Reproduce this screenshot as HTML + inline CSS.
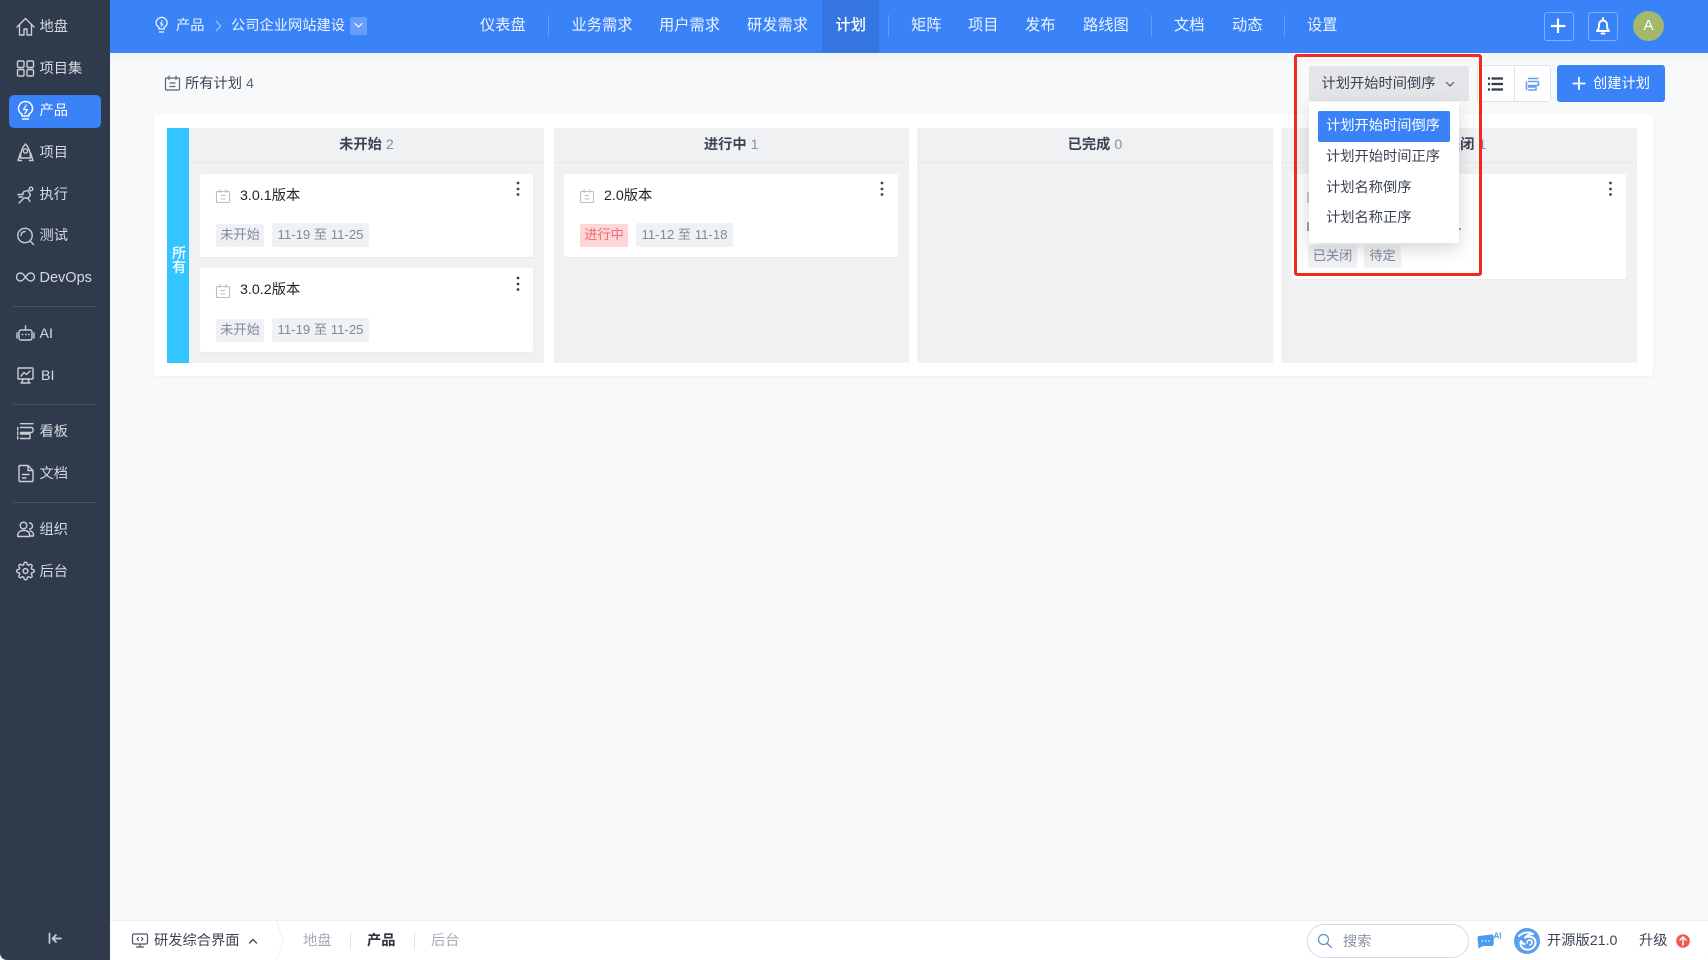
<!DOCTYPE html>
<html lang="zh">
<head>
<meta charset="utf-8">
<title>计划</title>
<style>
html,body{margin:0;padding:0;width:1708px;height:960px;overflow:hidden;background:#fff}
body{font-family:"Liberation Sans","Noto Sans CJK SC",sans-serif;font-size:14.25px;color:#3c4353}
#p{position:absolute;left:0;top:0;width:1708px;height:960px;background:#f8f9fb;overflow:hidden;border-radius:0 0 7px 7px;filter:blur(.3px)}
.b{position:absolute}
.t{position:absolute;white-space:nowrap;line-height:20px;height:20px}
.s{color:#d6dade}
.n{color:#eef4ff;font-size:15.25px}
.sep{position:absolute;width:1px;background:rgba(255,255,255,.22);top:15px;height:22px}
.d{position:absolute;left:13px;width:84px;height:1px;background:#465163}
.col{position:absolute;top:128px;height:235px;background:#f0f1f3}
.ch{position:absolute;left:0;right:0;top:0;height:34px;border-bottom:1px solid #e6e8eb;text-align:center;line-height:35px;font-weight:700;color:#3c4353;font-size:14.25px}
.ch span{font-weight:400;color:#8591a3;margin-left:0}
.card{position:absolute;background:#fff;border-radius:2px;box-shadow:0 1px 1px rgba(0,0,0,.03)}
.tag{position:absolute;height:23px;line-height:22px;font-size:13.2px;text-align:center;border-radius:2px;background:#eff1f4;color:#7f8a9a;white-space:nowrap}
.ti{color:#20242c;font-size:14.25px}
.mi{position:absolute;left:1326px;white-space:nowrap;line-height:20px;color:#3c4353;font-size:14.25px}
</style>
</head>
<body>
<div id="p">
  <!-- sidebar -->
  <div class="b" style="left:0;top:0;width:110px;height:960px;background:#2f3b4d"></div>
  <div class="b" style="left:9px;top:95px;width:92px;height:33px;background:#3a82f8;border-radius:5px"></div>
  <div class="t s" style="left:39.5px;top:17px">地盘</div>
  <div class="t s" style="left:39.5px;top:59px">项目集</div>
  <div class="t" style="left:39.5px;top:101px;color:#fff">产品</div>
  <div class="t s" style="left:39.5px;top:143px">项目</div>
  <div class="t s" style="left:39.5px;top:185px">执行</div>
  <div class="t s" style="left:39.5px;top:226px">测试</div>
  <div class="t s" style="left:39.5px;top:268px;font-size:14.5px">DevOps</div>
  <div class="d" style="top:306px"></div>
  <div class="t s" style="left:39.5px;top:324px">AI</div>
  <div class="t s" style="left:41px;top:366px">BI</div>
  <div class="d" style="top:404px"></div>
  <div class="t s" style="left:39.5px;top:422px">看板</div>
  <div class="t s" style="left:39.5px;top:464px">文档</div>
  <div class="d" style="top:502px"></div>
  <div class="t s" style="left:39.5px;top:520px">组织</div>
  <div class="t s" style="left:39.5px;top:562px">后台</div>

  <!-- header -->
  <div class="b" style="left:110px;top:0;width:1598px;height:53px;background:#3a82f8"></div>
  <div class="b" style="left:110px;top:53px;width:1598px;height:12px;background:linear-gradient(#f2f4f6,#f8f9fb)"></div>
  <div class="t" style="left:176px;top:15.5px;color:#eef4ff">产品</div>
  <div class="t" style="left:231px;top:15.5px;color:#eef4ff">公司企业网站建设</div>
  <div class="b" style="left:350px;top:17px;width:17px;height:18px;border-radius:2px;background:rgba(255,255,255,.22)"></div>
  <div class="b" style="left:822px;top:0;width:57px;height:53px;background:#3576e0"></div>
  <div class="t n" style="left:480px;top:15.5px">仪表盘</div>
  <div class="sep" style="left:548px"></div>
  <div class="t n" style="left:571.5px;top:15.5px">业务需求</div>
  <div class="t n" style="left:659px;top:15.5px">用户需求</div>
  <div class="t n" style="left:747px;top:15.5px">研发需求</div>
  <div class="t n" style="left:835.5px;top:15.5px;color:#fff;font-weight:500">计划</div>
  <div class="sep" style="left:888px"></div>
  <div class="t n" style="left:911px;top:15.5px">矩阵</div>
  <div class="t n" style="left:968px;top:15.5px">项目</div>
  <div class="t n" style="left:1025px;top:15.5px">发布</div>
  <div class="t n" style="left:1083px;top:15.5px">路线图</div>
  <div class="sep" style="left:1151px"></div>
  <div class="t n" style="left:1174px;top:15.5px">文档</div>
  <div class="t n" style="left:1232px;top:15.5px">动态</div>
  <div class="sep" style="left:1284px"></div>
  <div class="t n" style="left:1307px;top:15.5px">设置</div>
  <div class="b" style="left:1544px;top:12px;width:28px;height:27px;border:1px solid rgba(255,255,255,.35);border-radius:3px"></div>
  <div class="b" style="left:1588px;top:12px;width:28px;height:27px;border:1px solid rgba(255,255,255,.35);border-radius:3px"></div>
  <div class="b" style="left:1633px;top:11px;width:31px;height:30px;border-radius:50%;background:#a3b86c;color:#fff;text-align:center;line-height:30px;font-size:15px">A</div>

  <!-- toolbar -->
  <div class="t" style="left:185px;top:74px;color:#3c4353;font-size:14.25px">所有计划 <span style="color:#5c6778">4</span></div>
  <div class="b" style="left:1477px;top:65px;width:72px;height:35px;background:#fff;border:1px solid #dfe2e8;border-radius:3px"></div>
  <div class="b" style="left:1514px;top:66px;width:1px;height:35px;background:#dfe2e8"></div>
  <div class="b" style="left:1557px;top:65px;width:108px;height:37px;background:#3a82f8;border-radius:3px"></div>
  <div class="t" style="left:1593px;top:74px;color:#fff">创建计划</div>

  <!-- board -->
  <div class="b" style="left:154px;top:114px;width:1499px;height:262px;background:#fff;border-radius:3px;box-shadow:0 1px 3px rgba(0,0,0,.05)"></div>
  <div class="b" style="left:167px;top:128px;width:22px;height:235px;background:#33c5ff"></div>
  <div class="b" style="left:172px;top:248px;width:15px;color:#fff;font-size:14.25px;line-height:13.5px;font-weight:500">所有</div>

  <div class="col" style="left:189px;width:355px">
    <div class="ch">未开始 <span>2</span></div>
  </div>
  <div class="col" style="left:553.5px;width:355.5px">
    <div class="ch">进行中 <span>1</span></div>
  </div>
  <div class="col" style="left:917px;width:356px">
    <div class="ch">已完成 <span>0</span></div>
  </div>
  <div class="col" style="left:1281px;width:356px">
    <div class="ch">已关闭 <span>1</span></div>
  </div>

  <div class="card" style="left:200px;top:174px;width:333px;height:83px"></div>
  <div class="t ti" style="left:240px;top:186px">3.0.1版本</div>
  <div class="tag" style="left:216px;top:224px;width:48px">未开始</div>
  <div class="tag" style="left:272px;top:223px;width:97px;height:24px;line-height:23.5px">11-19 至 11-25</div>

  <div class="card" style="left:200px;top:268px;width:333px;height:84px"></div>
  <div class="t ti" style="left:240px;top:280px">3.0.2版本</div>
  <div class="tag" style="left:216px;top:319px;width:48px">未开始</div>
  <div class="tag" style="left:272px;top:318px;width:97px;height:24px;line-height:23px">11-19 至 11-25</div>

  <div class="card" style="left:564px;top:174px;width:334px;height:83px"></div>
  <div class="t ti" style="left:604px;top:186px">2.0版本</div>
  <div class="tag" style="left:580px;top:224px;width:48px;background:#ffd6d8;color:#ee6b6f">进行中</div>
  <div class="tag" style="left:636px;top:223px;width:97px;height:24px;line-height:23.5px">11-12 至 11-18</div>

  <div class="card" style="left:1292px;top:174px;width:334px;height:105px"></div>
  <div class="b" style="left:1307px;top:192px;width:2px;height:11px;background:#c4c9d1"></div>
  <div class="b" style="left:1307px;top:222px;width:2px;height:9px;background:#9aa1ad"></div>
  <div class="b" style="left:1459px;top:228px;width:2px;height:2px;background:#9aa1ad"></div>
  <div class="tag" style="left:1308px;top:245px;width:49px">已关闭</div>
  <div class="tag" style="left:1364px;top:245px;width:37px">待定</div>

  <!-- sort dropdown -->
  <div class="b" style="left:1309px;top:66px;width:160px;height:35px;background:#e4e5e8;border-radius:2px"></div>
  <div class="t" style="left:1321.5px;top:74px;color:#3c4353">计划开始时间倒序</div>
  <div class="b" style="left:1309px;top:102px;width:150px;height:141px;background:#fff;border-radius:2px;box-shadow:0 6px 18px rgba(0,0,0,.16)"></div>
  <div class="b" style="left:1318px;top:111px;width:132px;height:31px;background:#3a82f8;border-radius:2px"></div>
  <div class="mi" style="top:116px;color:#fff">计划开始时间倒序</div>
  <div class="mi" style="top:147px">计划开始时间正序</div>
  <div class="mi" style="top:178px">计划名称倒序</div>
  <div class="mi" style="top:208px">计划名称正序</div>
  <div class="b" style="left:1294px;top:54px;width:182px;height:216px;border:3px solid #ee2a20;border-radius:3px"></div>

  <!-- footer -->
  <div class="b" style="left:110px;top:920px;width:1598px;height:40px;background:#fff;border-top:1px solid #eceef2;box-sizing:border-box"></div>
  <div class="t" style="left:154px;top:931px;color:#3c4353">研发综合界面</div>
  <div class="t" style="left:303px;top:931px;color:#a5acb7">地盘</div>
  <div class="b" style="left:350px;top:932px;width:1px;height:18px;background:#e4e6ea"></div>
  <div class="t" style="left:367px;top:931px;color:#2b303a;font-weight:700">产品</div>
  <div class="b" style="left:414px;top:932px;width:1px;height:18px;background:#e4e6ea"></div>
  <div class="t" style="left:431px;top:931px;color:#a5acb7">后台</div>
  <div class="b" style="left:1307px;top:924px;width:160px;height:32px;border:1px solid #d4d9e5;border-radius:17px;background:#fff"></div>
  <div class="t" style="left:1343px;top:932px;color:#8a93a1">搜索</div>
  <div class="t" style="left:1547px;top:930.5px;color:#3c4353">开源版21.0</div>
  <div class="t" style="left:1639px;top:930.5px;color:#3c4353">升级</div>

  <!-- icons -->
  <svg class="b" style="left:0;top:0" width="1708" height="960" viewBox="0 0 1708 960" fill="none" stroke-linecap="round" stroke-linejoin="round">
    <g stroke="#c9ced5" stroke-width="1.4">
      <path d="M17 27 25.5 18.5 34 27M19.5 25V35H24V29H27V35H31.5V25"/>
      <rect x="17.5" y="61" width="6.5" height="6.5" rx="1.3"/><rect x="27" y="61" width="6.5" height="6.5" rx="1.3"/>
      <rect x="17.5" y="69.5" width="6.5" height="6.5" rx="1.3"/><rect x="27" y="69.5" width="6.5" height="6.5" rx="1.3"/>
      <path d="M25.5 144C22 147.5 20.5 152 20.5 158H30.5C30.5 152 29 147.5 25.5 144Z"/><circle cx="25.5" cy="151" r="2.2"/><path d="M20.5 153 18 160.5H21.5M30.5 153 33 160.5H29.5"/>
      <circle cx="31" cy="189" r="1.8"/><path d="M24 191.5 28 190.5 30.5 195 28 198.5 30 201.5M28 198 24 198 19 203M18 194.5H23M19 197H22.5M24 191.5 22.5 194"/>
      <circle cx="25" cy="235.5" r="7.2"/><path d="M30 241 33.5 244.5M21 235.5a4 4 0 0 1 4-4"/>
      <path d="M25.5 277C23 273.5 21.5 273 20.5 273a4 4 0 0 0 0 8c1 0 2.5-.5 5-4 2.5-3.5 4-4 5-4a4 4 0 0 1 0 8c-1 0-2.5-.5-5-4Z"/>
      <rect x="19" y="330" width="13" height="10" rx="2"/><path d="M25.5 330V326M17 333V338M34 333V338"/>
      <rect x="18" y="368" width="15" height="11" rx=".8"/><path d="M21 376 24 372.5 26.5 374.5 30 371M22 382.5 23 379M29 382.5 28 379M21 383H30"/>
      <path d="M20.5 423.7H33M20.5 427.5H31.5a1.5 1.5 0 0 1 1.5 1.5V431a1.5 1.5 0 0 1-1.5 1.5H20.5M20.5 434H30v4.5H20.5M17.7 427.5V430M17.7 432V434.5M17.7 436.5V439"/>
      <path d="M20 465.5H28L33 470.5V480.5a1 1 0 0 1-1 1H20a1 1 0 0 1-1-1V466.5a1 1 0 0 1 1-1ZM28 465.5V470.5H33M22.5 474.5H29M22.5 478H26"/>
      <circle cx="23.5" cy="525.5" r="3.3"/><path d="M17.7 536.5V535a5 5 0 0 1 5-4.5H25a5 5 0 0 1 4.5 3.5V536.5ZM29.5 523a3 3 0 0 1 0 6M30 531a4 4 0 0 1 3.5 3.5V536H30"/>
      <g transform="translate(15.9 561.4) scale(.8)" stroke-width="1.8"><circle cx="12" cy="12" r="3"/><path d="M19.4 15a1.65 1.65 0 0 0 .33 1.82l.06.06a2 2 0 0 1 0 2.83 2 2 0 0 1-2.83 0l-.06-.06a1.65 1.65 0 0 0-1.82-.33 1.65 1.65 0 0 0-1 1.51V21a2 2 0 0 1-2 2 2 2 0 0 1-2-2v-.09A1.65 1.65 0 0 0 9 19.4a1.65 1.65 0 0 0-1.82.33l-.06.06a2 2 0 0 1-2.83 0 2 2 0 0 1 0-2.83l.06-.06a1.65 1.65 0 0 0 .33-1.82 1.65 1.65 0 0 0-1.51-1H3a2 2 0 0 1-2-2 2 2 0 0 1 2-2h.09A1.65 1.65 0 0 0 4.6 9a1.65 1.65 0 0 0-.33-1.82l-.06-.06a2 2 0 0 1 0-2.83 2 2 0 0 1 2.83 0l.06.06a1.65 1.65 0 0 0 1.82.33H9a1.65 1.65 0 0 0 1-1.51V3a2 2 0 0 1 2-2 2 2 0 0 1 2 2v.09a1.65 1.65 0 0 0 1 1.51 1.65 1.65 0 0 0 1.82-.33l.06-.06a2 2 0 0 1 2.83 0 2 2 0 0 1 0 2.83l-.06.06a1.65 1.65 0 0 0-.33 1.82V9a1.65 1.65 0 0 0 1.51 1H21a2 2 0 0 1 2 2 2 2 0 0 1-2 2h-.09a1.65 1.65 0 0 0-1.51 1z"/></g>
      <path d="M49.5 933.5V943M61 938.5H53M56 935 52.5 938.5 56 942" stroke-width="1.7"/>
    </g>
    <circle cx="26" cy="334.5" r=".9" fill="#c9ced5"/><circle cx="22.5" cy="334.5" r=".9" fill="#c9ced5"/><circle cx="29" cy="334.5" r=".9" fill="#c9ced5"/>
    <!-- active product bulb -->
    <g stroke="#fff" stroke-width="1.5">
      <path d="M22 116V114.2C20 113 18.5 111 18.5 108.5A7 7 0 0 1 32.5 108.5C32.5 111 31 113 29 114.2V116ZM22.5 119H28.5"/>
      <path d="M26.2 105 23.5 109.5H27.5L24.8 113.5" stroke-width="1.2"/>
    </g>
    <!-- breadcrumb -->
    <g stroke="#eef4ff" stroke-width="1.3">
      <path d="M159 29V27.3C157.4 26.3 156 24.5 156 23A5.6 5.6 0 0 1 167.2 23C167.2 24.5 165.8 26.3 164.2 27.3V29ZM159.5 32H163.7"/>
      <path d="M162.3 20.5 160.5 24H163L161.2 26.5" stroke-width="1"/>
    </g>
    <path d="M216.5 21.5 220.5 26 216.5 30.5" stroke="#8db6fb" stroke-width="1.6"/>
    <path d="M355 23.5 358.5 27 362 23.5" stroke="#fff" stroke-width="1.2"/>
    <path d="M1558 18.5V33M1551 26H1565.5" stroke="#fff" stroke-width="2.2" stroke-linecap="butt"/>
    <path d="M1597 31H1609C1607 29 1607 27 1607 24.5A4 4 0 0 0 1599 24.5C1599 27 1599 29 1597 31Z" stroke="#fff" stroke-width="2" fill="none"/>
    <path d="M1601.5 33.5H1604.5M1603 18V19" stroke="#fff" stroke-width="1.9"/>
    <!-- toolbar plan icon -->
    <g stroke="#5c6675" stroke-width="1.2"><rect x="165.5" y="78" width="14" height="12" rx="1"/><path d="M169 76V79.5M176 76V79.5M170 83H175M170 86.5H175"/></g>
    <!-- card plan icons -->
    <g stroke="#b9bfc9" stroke-width="1.1">
      <rect x="216.5" y="191.5" width="13" height="11" rx="1"/><path d="M220 189.5V192.5M226 189.5V192.5M221 195.5H225M221 199H225"/>
      <rect x="216.5" y="286.5" width="13" height="11" rx="1"/><path d="M220 284.5V287.5M226 284.5V287.5M221 290.5H225M221 294H225"/>
      <rect x="580.5" y="191.5" width="13" height="11" rx="1"/><path d="M584 189.5V192.5M590 189.5V192.5M585 195.5H589M585 199H589"/>
    </g>
    <!-- card menu dots -->
    <g fill="#3c4353">
      <circle cx="518" cy="183" r="1.4"/><circle cx="518" cy="189" r="1.4"/><circle cx="518" cy="194.5" r="1.4"/>
      <circle cx="518" cy="278" r="1.4"/><circle cx="518" cy="284" r="1.4"/><circle cx="518" cy="289.5" r="1.4"/>
      <circle cx="882" cy="183" r="1.4"/><circle cx="882" cy="189" r="1.4"/><circle cx="882" cy="194.5" r="1.4"/>
      <circle cx="1610.5" cy="183" r="1.4"/><circle cx="1610.5" cy="189" r="1.4"/><circle cx="1610.5" cy="194.5" r="1.4"/>
    </g>
    <!-- sort chevron -->
    <path d="M1446.5 82.5 1450 86 1453.5 82.5" stroke="#4b5463" stroke-width="1.2"/>
    <!-- list / kanban toggle -->
    <path d="M1491.5 78.5H1503M1491.5 84H1503M1491.5 89.5H1503" stroke="#313a4a" stroke-width="2.2" stroke-linecap="butt"/>
    <path d="M1488 78.5H1490M1488 84H1490M1488 89.5H1490" stroke="#313a4a" stroke-width="2.2" stroke-linecap="butt"/>
    <g stroke="#6b9ef0" stroke-width="1.6">
      <path d="M1528 78.5H1538.5M1528 81.5H1537.5a1 1 0 0 1 1 1V84.5a1 1 0 0 1-1 1H1528M1528 87H1536V90H1528M1526.5 81.5V90" stroke-linecap="butt"/>
    </g>
    <!-- create plus -->
    <path d="M1579 77V90M1572.5 83.5H1585.5" stroke="#fff" stroke-width="1.8" stroke-linecap="butt"/>
    <!-- footer left -->
    <g stroke="#4a5362" stroke-width="1.2">
      <rect x="132.5" y="934" width="15" height="10" rx="1.5"/><path d="M140 944V947M136.5 947H143.5M138.5 937.5 137 939 138.5 940.5M141.5 937.5 143 939 141.5 940.5"/>
    </g>
    <path d="M249.5 943 253 939.5 256.5 943" stroke="#3c4353" stroke-width="1.3"/>
    <path d="M276.5 921 283.5 941 276.5 960" stroke="#eceef2" stroke-width="1"/>
    <!-- search -->
    <circle cx="1323.5" cy="939.5" r="5" stroke="#5b8fdd" stroke-width="1.2"/><path d="M1327.2 943.5 1331.5 947.5" stroke="#5b8fdd" stroke-width="1.2"/>
    <!-- AI bubble -->
    <path d="M1479 936 1491.5 934.5a2 2 0 0 1 2.2 2V944a2 2 0 0 1-2 2H1483L1478.5 948.5 1477.5 938a2 2 0 0 1 1.5-2Z" fill="#4a9cf3"/>
    <circle cx="1482" cy="941" r=".8" fill="#fff"/><circle cx="1485.5" cy="941" r=".8" fill="#fff"/><circle cx="1489" cy="941" r=".8" fill="#fff"/>
    <text x="1493.5" y="938.5" font-family="Liberation Sans,sans-serif" font-size="8" font-weight="700" fill="#4a9cf3">AI</text>
    <!-- logo -->
    <circle cx="1527" cy="941" r="13" fill="#5a9eee"/>
    <path d="M1519 936C1523 932 1530 931.5 1533 934 1530 934 1527 935.5 1525 937.5 1529 935.5 1535 937 1535.5 942 1536 947 1530.5 950.5 1526 949.5 1521.5 948.5 1519.5 944.5 1521 941 1522 943 1523 944 1524.5 944" stroke="#fff" stroke-width="2" fill="none"/>
    <path d="M1527 943a2.5 2.5 0 1 1 3 2" stroke="#fff" stroke-width="1.6" fill="none"/>
    <!-- upgrade -->
    <circle cx="1683" cy="941" r="6.8" fill="#ee5a52"/>
    <path d="M1683 945V937.5M1680 940 1683 937 1686 940" stroke="#fff" stroke-width="1.5" fill="none"/>
  </svg>
</div>
</body>
</html>
